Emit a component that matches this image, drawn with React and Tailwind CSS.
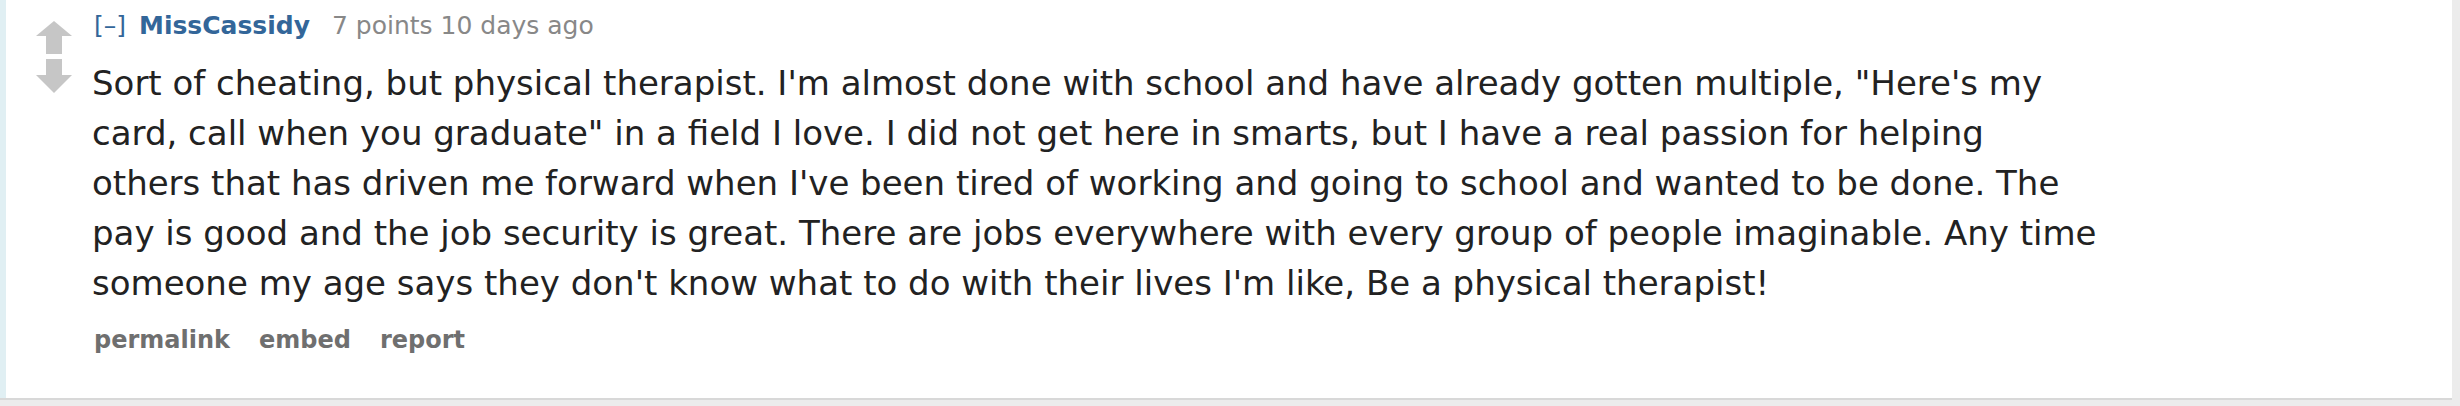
import React from "react";

const body =
  "Sort of cheating, but physical therapist. I'm almost done with school and have already gotten multiple, \"Here's my card, call when you graduate\" in a field I love. I did not get here in smarts, but I have a real passion for helping others that has driven me forward when I've been tired of working and going to school and wanted to be done. The pay is good and the job security is great. There are jobs everywhere with every group of people imaginable. Any time someone my age says they don't know what to do with their lives I'm like, Be a physical therapist!";

const UpArrow = () => (
  <svg width="36" height="33" viewBox="0 0 36 33">
    <polygon points="18,0 36,15 0,15" fill="#c6c6c6" />
    <rect x="10" y="15" width="16" height="18" fill="#c6c6c6" />
  </svg>
);

const DownArrow = () => (
  <svg width="36" height="34" viewBox="0 0 36 34">
    <rect x="10" y="0" width="16" height="16" fill="#c6c6c6" />
    <polygon points="0,16 36,16 18,34" fill="#c6c6c6" />
  </svg>
);

export default function App() {
  return (
    <div
      className="w-[2460px] h-[406px] bg-[#ececec] flex flex-col"
      style={{ fontFamily: '"DejaVu Sans", Verdana, sans-serif' }}
    >
      <div className="flex h-[400px] mr-[8px] bg-white border-b-2 border-[#d8d8d8]">
        {/* left thread line */}
        <div className="w-[6px] bg-[#e0eff3]" />

        {/* votes */}
        <div className="flex flex-col gap-[5px] pt-[21px] pl-[30px] pr-[20px]">
          <UpArrow />
          <DownArrow />
        </div>

        {/* comment */}
        <div className="flex flex-col pt-[11px]">
          <div className="flex items-baseline text-[25px] leading-[30px] pl-[2px]">
            <span className="text-[#336699]">[–]</span>
            <span className="ml-[13px] font-bold text-[#336699]">MissCassidy</span>
            <span className="ml-[22px] text-[#888888]">7 points 10 days ago</span>
          </div>
          <p className="mt-[17px] max-w-[2008px] text-[34px] leading-[50px] text-[#222222]">
            {body}
          </p>
          <div className="flex gap-[29px] mt-[17px] pl-[2px] text-[24px] leading-[30px] font-bold text-[#6f6f6f]">
            <span>permalink</span>
            <span>embed</span>
            <span>report</span>
          </div>
        </div>
      </div>
    </div>
  );
}
